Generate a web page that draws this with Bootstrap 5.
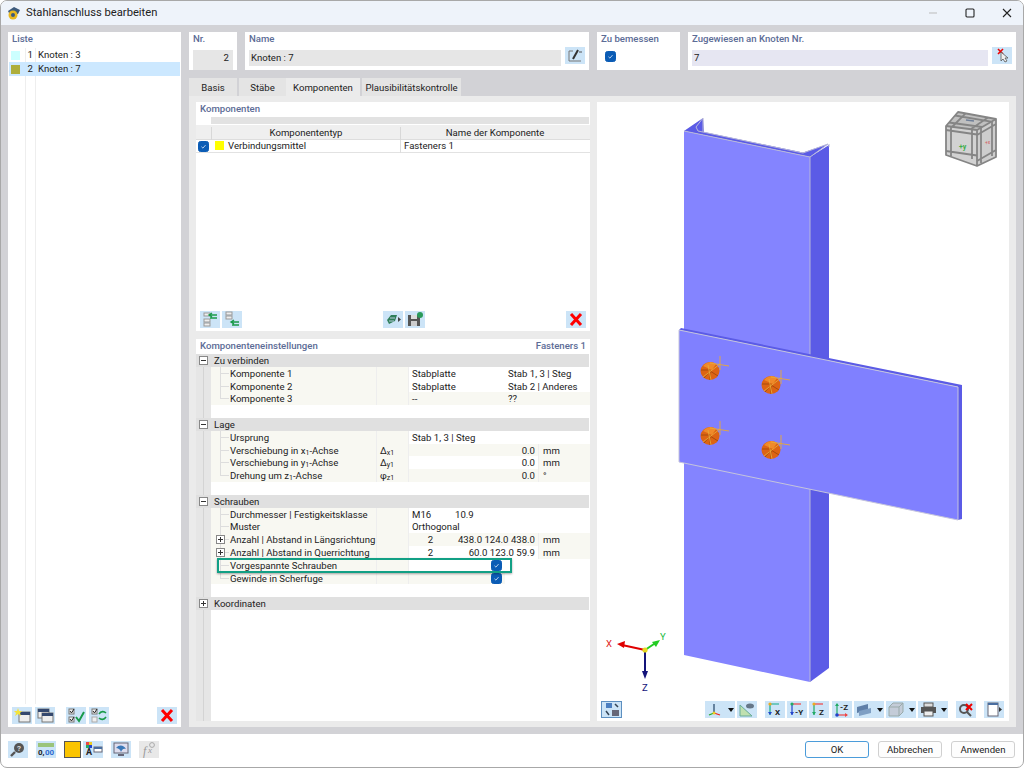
<!DOCTYPE html>
<html lang="de">
<head>
<meta charset="UTF-8">
<title>Stahlanschluss bearbeiten</title>
<link href="https://cdn.jsdelivr.net/npm/bootstrap@5.3.0/dist/css/bootstrap.min.css" rel="stylesheet">
<style>
body { margin: 0; background: #fff; font-family: Roboto, "Liberation Sans", sans-serif; font-size: 9.6px; color: #222; line-height: 12.8px; }
.dlg { width: 1024px; height: 768px; background: #fff; border: 1px solid #a8a8a8; border-radius: 7px; overflow: hidden; }
.titlebar { height: 24px; background: #eef3fa; font-size: 11.2px; padding-left: 6px; gap: 5px; flex: none; }
.win-btns { gap: 27px; padding-right: 11px; }
.main-area { height: 709px; background: #d2d2d6; padding: 7px 7px; gap: 8px; flex: none; }
.pane { background: #fff; }
.list-pane { width: 173px; flex: none; }
.right-area { width: 827px; flex: none; }
.cap { color: #5c6c96; font-weight: 500; padding: 1px 4px; height: 15px; flex: none; }
.list-body { background: linear-gradient(to right, transparent 16px, #eee 16px, #eee 17px, transparent 17px, transparent 26px, #eee 26px, #eee 27px, transparent 27px); margin: 1px 1px 3px 1px; }
.list-item { height: 14px; padding-left: 2px; }
.list-item.sel { background: #cce8ff; }
.swatch { width: 9px; height: 9px; margin-right: 5px; flex: none; }
.sw-a { background: #ccffff; }
.sw-b { background: #aeae3c; }
.num { width: 8px; text-align: right; margin-right: 5px; }
.tbtn { width: 20px; height: 17px; background: #cce4f7; display: inline-flex; align-items: center; justify-content: center; flex: none; }
.tbtn.wide { width: 30px; justify-content: flex-start; }
.tbtn.wide::after { content: ""; border-left: 3.5px solid transparent; border-right: 3.5px solid transparent; border-top: 4px solid #111; margin-left: 3px; }
.tbtn.off { background: #e8e8e8; }
.tbtn.on { outline: 1px solid #5d8fc0; outline-offset: -1px; }
.tbtn svg { width: 20px; height: 17px; flex: none; }
.list-tools { height: 17px; padding: 0 4px; margin-bottom: 3px; gap: 3px; }
.fld { height: 16px; background: #e6e6e6; padding: 2px 4px 2px 2px; margin: 3px 4px 0; flex: 1; }
.fld-blue { background: #e6e6f2; }
.w-nr { width: 48px; }
.w-name { width: 344px; }
.w-bem { width: 83px; }
.w-zug { width: 328px; }
.top-row { height: 38px; gap: 8px; }
.form-check-input.bluecheck { width: 11px; height: 11px; margin: 0; background-color: #0b5cb5; border-color: #0b5cb5; border-radius: 2.5px; flex: none; background-image: url("data:image/svg+xml,%3Csvg xmlns='http://www.w3.org/2000/svg' viewBox='0 0 11 11'%3E%3Cpath d='M3 5.8 L4.8 7.5 L8 3.8' fill='none' stroke='%23dde8f6'/%3E%3C/svg%3E"); }
.tabs-row { margin-top: 8px; height: 18px; gap: 2px; }
.tab-it { background: #e4e4e4; height: 18px; padding: 4px 0 0; text-align: center; }
.tab-it.act { background: #ebebeb; }
.t1 { width: 48px; } .t2 { width: 47px; margin-right: -2px; } .t3 { width: 74px; } .t4 { width: 99px; }
.tab-body { height: 631px; background: #ebebeb; padding: 6px 7px; gap: 7px; }
.left-col { width: 394px; gap: 8px; flex: none; }
.comp-pane { height: 229px; }
.band { height: 7px; margin: 0 1px 1px 0; display: grid; grid-template-columns: 15px 189px 189px; background: #e2e2e2; }
.head-grid { display: grid; grid-template-columns: 15px 189px 189px; height: 15px; background: #efefef; text-align: center; border-bottom: 1px solid #ddd; padding-top: 2px; }
.head-grid > div + div { border-left: 1px solid #d8d8d8; }
.row-grid { display: grid; grid-template-columns: 15px 189px 189px; height: 13px; border-bottom: 1px solid #e2e2e2; }
.row-grid > div + div + div { border-left: 1px solid #ddd; padding-left: 3px; }
.yellow { width: 9px; height: 9px; background: #ff0; margin: 1px 4px 0 4px; }
.comp-tools { height: 17px; margin: auto 4px 3px 4px; }
.tree { position: relative; flex: 1; padding-left: 15px; background: linear-gradient(to right, #e6e6e6 7px, #d4d4d4 7px, #d4d4d4 8px, #e6e6e6 8px, #e6e6e6 15px, #fff 15px); }
.grp { height: 12.8px; margin-left: -15px; background: #e0e0e0; padding: 1px 0 0 18px; position: relative; margin-right: 1px; }
.box { width: 9px; height: 9px; border: 1px solid #888; background: #fff; display: block; position: absolute; left: 3px; top: 2px; }
.box::before { content: ""; position: absolute; left: 1px; right: 1px; top: 3px; height: 1px; background: #333; }
.box.plus::after { content: ""; position: absolute; top: 1px; bottom: 1px; left: 3px; width: 1px; background: #333; }
.trow { display: grid; grid-template-columns: 165px 33px 43px 53px 33px 52px; height: 12.8px; margin-right: 1px; }
.trow > div { overflow: hidden; white-space: nowrap; padding: 1px 3px 0; }
.lbl, .sym { background: #f8f8f2; }
.trow > .lbl { position: relative; padding-left: 19px; padding-right: 0; }
.lbl::before { content: ""; position: absolute; left: 9px; top: 0; bottom: 0; width: 1px; background: #ddd; }
.lbl::after { content: ""; position: absolute; left: 9px; top: 6px; width: 9px; height: 1px; background: #ddd; }
.lbl.end::before { bottom: 6px; }
.lbl .box { left: 5px; top: 2px; z-index: 1; }
.sym { border-left: 1px solid #eee; border-right: 1px solid #eee; }
.bg { background: #f8f8f2; }
.sp2 { grid-column: span 2; }
.sp3 { grid-column: span 3; }
.sp4 { grid-column: span 4; }
.trow > .unit { border-left: 1px solid #eee; padding-left: 4px; }
.gap-row { height: 12.8px; }
.tree sub { font-size: 7px; bottom: -1px; line-height: 0; }
.mark-box { position: absolute; left: 21px; top: 204px; width: 295px; height: 15px; border: 2px solid #12a085; box-shadow: 0 1px 2px rgba(0,0,0,.35); }
.view-pane { width: 412px; height: 619px; position: relative; flex: none; }
.view-pane > svg { display: block; }
.view-tools { position: absolute; left: 4px; right: 4px; top: 599px; height: 17px; }
.foot { height: 33px; padding: 7px 8px 0 7px; }
.foot .tbtn { margin-right: 8px; }
.yellow-btn { width: 17px; height: 17px; background: #fac400; border: 1px solid #555; margin-right: 2px; }
.dlg-btn { width: 64px; height: 17px; padding: 0; font-size: 9.6px; line-height: 15px; color: #222; background: #fdfdfd; border: 1px solid #d0d0d0; border-radius: 3px; margin-left: 9px; }
.dlg-btn.def { border: 1px solid #4a9bd9; }
.ms-2px { margin-left: 2px; }
.ms-8px { margin-left: 8px; }
.tool-mid { margin-left: 141px; }
.vt-first { width: 21px; }
.vt-axes { margin-left: 83px; }
.vt-z { margin-left: 3px; }
</style>
</head>
<body>
<div class="dlg d-flex flex-column">

  <div class="titlebar d-flex align-items-center">
    <svg width="14" height="14" viewBox="0 0 14 14"><path d="M1 5 L7 1 L13 4 L11 8 L3 9 Z" fill="#3c5a7c"/><circle cx="6" cy="9" r="4.5" fill="#e8b820"/><circle cx="6" cy="9" r="2" fill="#3c5a7c"/></svg>
    <span>Stahlanschluss bearbeiten</span>
    <div class="win-btns d-flex align-items-center ms-auto">
      <svg width="10" height="10" viewBox="0 0 10 10"><path d="M1 5 H9" stroke="#bbb"/></svg>
      <svg width="10" height="10" viewBox="0 0 10 10"><rect x="1" y="1" width="8" height="8" rx="1" fill="none" stroke="#222" stroke-width="1.1"/></svg>
      <svg width="10" height="10" viewBox="0 0 10 10"><path d="M1 1 L9 9 M9 1 L1 9" stroke="#222" stroke-width="1.1"/></svg>
    </div>
  </div>

  <div class="main-area d-flex">
    <div class="pane list-pane d-flex flex-column">
      <div class="cap">Liste</div>
      <div class="list-body flex-grow-1">
        <div class="list-item d-flex align-items-center"><span class="swatch sw-a"></span><span class="num">1</span><span>Knoten : 3</span></div>
        <div class="list-item sel d-flex align-items-center"><span class="swatch sw-b"></span><span class="num">2</span><span>Knoten : 7</span></div>
      </div>
      <div class="list-tools d-flex">
        <span class="tbtn"><svg viewBox="0 0 20 17"><rect x="7" y="5" width="11" height="10" fill="#eee" stroke="#777"/><rect x="7" y="5" width="11" height="3" fill="#34486e"/><path d="M6 1 L7 4 L10 4 L8 6 L9 9 L6 7 L3 9 L4 6 L2 4 L5 4 Z" fill="#f4e43c"/></svg></span>
        <span class="tbtn"><svg viewBox="0 0 20 17"><rect x="3" y="2" width="11" height="9" fill="#eee" stroke="#777"/><rect x="3" y="2" width="11" height="3" fill="#34486e"/><rect x="7" y="6" width="11" height="9" fill="#eee" stroke="#777"/><rect x="7" y="6" width="11" height="3" fill="#34486e"/></svg></span>
        <span class="tbtn ms-2"><svg viewBox="0 0 20 17"><rect x="3" y="2" width="5" height="5" fill="#eee" stroke="#777"/><rect x="3" y="10" width="5" height="5" fill="#eee" stroke="#777"/><path d="M4 4 L5.5 6 L8 2 M4 12 L5.5 14 L8 10" fill="none" stroke="#222"/><path d="M10 10 L13 14 L18 5" fill="none" stroke="#1a9a4a" stroke-width="2"/></svg></span>
        <span class="tbtn"><svg viewBox="0 0 20 17"><rect x="3" y="2" width="5" height="5" fill="#eee" stroke="#777"/><rect x="3" y="10" width="5" height="5" fill="#eee" stroke="#aaa"/><path d="M4 4 L5.5 6 L8 2" fill="none" stroke="#222"/><path d="M10 7 C12 4 15 4 17 6 M17 10 C15 13 12 13 10 11" fill="none" stroke="#1a9a4a" stroke-width="1.6"/></svg></span>
        <span class="tbtn ms-auto"><svg viewBox="0 0 20 17"><path d="M5 3 L15 14 M15 3 L5 14" stroke="#f00" stroke-width="3"/></svg></span>
      </div>
    </div>

    <div class="right-area d-flex flex-column">
      <div class="top-row d-flex">
        <div class="pane w-nr d-flex flex-column"><div class="cap">Nr.</div><div class="fld text-end">2</div></div>
        <div class="pane w-name d-flex flex-column">
          <div class="cap">Name</div>
          <div class="d-flex"><div class="fld">Knoten : 7</div>
            <span class="tbtn me-1"><svg viewBox="0 0 20 17"><path d="M8 4 H4 V14 H16" fill="none" stroke="#777"/><path d="M8 12 L13 3" stroke="#333" stroke-width="2"/><path d="M14 5 H17" stroke="#555"/></svg></span></div>
        </div>
        <div class="pane w-bem d-flex flex-column"><div class="cap">Zu bemessen</div><div class="ps-1 pt-1 ms-1 d-flex"><input class="form-check-input bluecheck" type="checkbox" checked></div></div>
        <div class="pane w-zug d-flex flex-column">
          <div class="cap">Zugewiesen an Knoten Nr.</div>
          <div class="d-flex"><div class="fld fld-blue">7</div>
            <span class="tbtn me-1"><svg viewBox="0 0 20 17"><path d="M6 2 L11 7 M11 2 L6 7" stroke="#e00" stroke-width="1.6"/><path d="M9 5 L9 14 L11 12 L13 15 L15 14 L13 11 L16 11 Z" fill="#eee" stroke="#555" stroke-width=".8"/></svg></span></div>
        </div>
      </div>

      <div class="tabs-row d-flex">
        <div class="tab-it t1">Basis</div>
        <div class="tab-it t2">Stäbe</div>
        <div class="tab-it t3 act">Komponenten</div>
        <div class="tab-it t4">Plausibilitätskontrolle</div>
      </div>

      <div class="tab-body d-flex">
        <div class="left-col d-flex flex-column">
          <div class="pane comp-pane d-flex flex-column">
            <div class="cap">Komponenten</div>
            <div class="band"><div class="bg-white"></div></div>
            <div class="head-grid"><div></div><div>Komponententyp</div><div>Name der Komponente</div></div>
            <div class="row-grid">
              <div class="d-flex justify-content-center align-items-center"><input class="form-check-input bluecheck" type="checkbox" checked></div>
              <div class="d-flex"><span class="yellow"></span>Verbindungsmittel</div>
              <div>Fasteners 1</div>
            </div>
            <div class="comp-tools d-flex">
              <span class="tbtn"><svg viewBox="0 0 20 17"><rect x="4" y="2" width="6" height="3" fill="#eee" stroke="#999"/><rect x="4" y="8" width="6" height="3" fill="#eee" stroke="#999"/><rect x="4" y="12" width="6" height="3" fill="#eee" stroke="#999"/><path d="M17 4 H9 M12 2 L9 4 L12 6 M17 7 H10" stroke="#1a9a4a" stroke-width="1.4" fill="none"/></svg></span>
              <span class="tbtn ms-2px"><svg viewBox="0 0 20 17"><rect x="4" y="1" width="6" height="3" fill="#eee" stroke="#999"/><rect x="4" y="5" width="6" height="3" fill="#eee" stroke="#999"/><path d="M17 11 H9 M12 9 L9 11 L12 13 M17 14 H10" stroke="#1a9a4a" stroke-width="1.4" fill="none"/></svg></span>
              <span class="tbtn tool-mid"><svg viewBox="0 0 20 17"><path d="M4 9 L8 4 H14 L12 10 L6 13 Z" fill="#2f7f5a"/><path d="M7 7 L12 7 M6 10 L11 10" stroke="#bcd"/><path d="M15 6 L18 8.5 L15 11 Z" fill="#444"/></svg></span>
              <span class="tbtn ms-2px"><svg viewBox="0 0 20 17"><path d="M3 4 H13 L15 6 V15 H3 Z" fill="#555"/><rect x="6" y="4" width="6" height="4" fill="#ddd"/><rect x="6" y="10" width="6" height="5" fill="#ccc"/><circle cx="15" cy="4" r="3" fill="#2a9a5a"/></svg></span>
              <span class="tbtn ms-auto"><svg viewBox="0 0 20 17"><path d="M5 3 L15 14 M15 3 L5 14" stroke="#f00" stroke-width="3"/></svg></span>
            </div>
          </div>

          <div class="pane flex-grow-1 d-flex flex-column">
            <div class="cap d-flex justify-content-between"><span>Komponenteneinstellungen</span><span>Fasteners 1</span></div>
            <div class="tree">
              <div class="grp"><span class="box"></span>Zu verbinden</div>
              <div class="trow"><div class="lbl">Komponente 1</div><div class="sym"></div><div class="sp2">Stabplatte</div><div class="sp2">Stab 1, 3 | Steg</div></div>
              <div class="trow"><div class="lbl">Komponente 2</div><div class="sym"></div><div class="sp2">Stabplatte</div><div class="sp2">Stab 2 | Anderes</div></div>
              <div class="trow"><div class="lbl end">Komponente 3</div><div class="sym"></div><div class="sp2 bg">--</div><div class="sp2 bg">??</div></div>
              <div class="gap-row"></div>

              <div class="grp"><span class="box"></span>Lage</div>
              <div class="trow"><div class="lbl">Ursprung</div><div class="sym"></div><div class="sp4">Stab 1, 3 | Steg</div></div>
              <div class="trow"><div class="lbl">Verschiebung in x<sub>1</sub>-Achse</div><div class="sym">&Delta;<sub>x1</sub></div><div class="sp3 text-end bg">0.0</div><div class="unit bg">mm</div></div>
              <div class="trow"><div class="lbl">Verschiebung in y<sub>1</sub>-Achse</div><div class="sym">&Delta;<sub>y1</sub></div><div class="sp3 text-end">0.0</div><div class="unit bg">mm</div></div>
              <div class="trow"><div class="lbl end">Drehung um z<sub>1</sub>-Achse</div><div class="sym">&phi;<sub>z1</sub></div><div class="sp3 text-end bg">0.0</div><div class="unit bg">°</div></div>
              <div class="gap-row"></div>

              <div class="grp"><span class="box"></span>Schrauben</div>
              <div class="trow"><div class="lbl">Durchmesser | Festigkeitsklasse</div><div class="sym"></div><div>M16</div><div class="sp3">10.9</div></div>
              <div class="trow"><div class="lbl">Muster</div><div class="sym"></div><div class="sp4">Orthogonal</div></div>
              <div class="trow"><div class="lbl"><span class="box plus"></span>Anzahl | Abstand in Längsrichtung</div><div class="sym"></div><div class="text-center bg">2</div><div class="sp2 text-end bg">438.0 124.0 438.0</div><div class="unit bg">mm</div></div>
              <div class="trow"><div class="lbl"><span class="box plus"></span>Anzahl | Abstand in Querrichtung</div><div class="sym"></div><div class="text-center">2</div><div class="sp2 text-end">60.0 123.0 59.9</div><div class="unit bg">mm</div></div>
              <div class="trow"><div class="lbl">Vorgespannte Schrauben</div><div class="sym"></div><div class="sp2 d-flex justify-content-end align-items-center"><input class="form-check-input bluecheck" type="checkbox" checked></div><div class="sp2"></div></div>
              <div class="trow"><div class="lbl end">Gewinde in Scherfuge</div><div class="sym"></div><div class="sp2 d-flex justify-content-end align-items-center bg"><input class="form-check-input bluecheck" type="checkbox" checked></div><div class="sp2"></div></div>
              <div class="gap-row"></div>

              <div class="grp"><span class="box plus"></span>Koordinaten</div>
              <div class="mark-box"></div>
            </div>
          </div>
        </div>

        <div class="pane view-pane">
          <svg width="412" height="619" viewBox="597 102 412 619">
            <!-- C section -->
            <polygon points="810,157 829,145 829,668 810,682" fill="#5b5be6"/>
            <polygon points="684,131 703,118 704,132 803,152.5 828,144 810,157" fill="#5b5be6"/>
            <polygon points="684,131 810,157 810,682 684,655" fill="#8484ff"/>
            <path d="M684,131 L810,157 V682 M703,118 L696,127 L698,131 L803,153 L828,144 L810,157 M703,118 V132 M829,144 V147" fill="none" stroke="#b8b8d8" stroke-width="1"/>
            <!-- plate -->
            <polygon points="679,330 681,328 962,385 962,519 958,520 958,387" fill="#5b5be6"/>
            <polygon points="679,330 958,387 958,520 679,462" fill="#8080ff"/>
            <path d="M679,462 V330 L958,387 V520 L679,462" fill="none" stroke="#c4c4dc"/>
            <g id="bolt">
              <ellipse cx="710" cy="371" rx="9.5" ry="9" fill="#dd6414"/>
              <path d="M703 366 A9 9 0 0 1 716 364 L712 370 Z" fill="#ef8a2a"/>
              <path d="M704 378 L710 371 L710 380 M710 371 L718 376 M701 370 H710" stroke="#a84c0a" fill="none"/>
              <path d="M703 377 L720 364 M720 356 V370 M710 363 L729 366 M708 365 L711 380" stroke="#e8a838" stroke-width=".9" fill="none"/>
            </g>
            <use href="#bolt" x="61" y="14"/>
            <use href="#bolt" x="0" y="65"/>
            <use href="#bolt" x="61" y="79"/>
            <!-- view cube -->
            <polygon points="946,126 977,130 977,166 946,155" fill="#d2d2d2"/>
            <polygon points="977,130 996,119 996,157 977,166" fill="#cdcdcd"/>
            <polygon points="946,126 958,112 996,119 977,130" fill="#c0c0c0"/>
            <g stroke="#858585" stroke-width="1.8" fill="none" stroke-linejoin="round">
              <path d="M951 127 V156 M972 129 V159 M946 130 L977 134.5 M946 151 L977 155.5"/>
              <path d="M981 128 V163 M992 121 V156 M977 135 L996 124 M977 161 L996 150"/>
              <path d="M949 122.5 L982 127 M955 115.5 L991 121.7 M952 127 L965.6 113.4 M971 129 L988 117.6"/>
              <path d="M946 126 L958 112 L996 119 V157 L977 166 L946 155 Z M946 126 L977 130 L996 119 M977 130 V166"/>
            </g>
            <path d="M966 120 L974 121" stroke="#6f7f98" stroke-width="1.5"/>
            <text x="959" y="149" font-size="7" font-weight="700" fill="#3fae4a">+y</text>
            <text x="985" y="144" font-size="5" fill="#d46060">+x</text>
            <!-- axes -->
            <path d="M645 650 L622 645" stroke="#e00000" stroke-width="2"/><polygon points="617,644 625,641 624,648" fill="#e00000"/>
            <path d="M645 650 L657 642" stroke="#22cc22" stroke-width="2"/><polygon points="660,640 652,642 656,647" fill="#22cc22"/>
            <path d="M645 650 V672" stroke="#14147a" stroke-width="2"/><polygon points="645,679 642,671 648,671" fill="#14147a"/>
            <circle cx="645" cy="650" r="2.6" fill="#e8d820"/>
            <text x="606" y="647" font-size="9.5" fill="#e02020">X</text>
            <text x="660" y="640" font-size="9.5" fill="#22bb44">Y</text>
            <text x="642" y="691" font-size="9.5" fill="#14147a">Z</text>
          </svg>
          <div class="view-tools d-flex">
            <span class="tbtn on vt-first"><svg viewBox="0 0 20 17"><rect x="4" y="2" width="6" height="5" fill="#4a7ec0"/><rect x="10" y="9" width="7" height="6" fill="#667"/><path d="M13 3 L16 6 M4 10 L7 14" stroke="#345" stroke-width="1.5"/></svg></span>
            <span class="tbtn wide vt-axes"><svg viewBox="0 0 20 17"><path d="M9 3 V12" stroke="#246" stroke-width="1.2"/><path d="M9 12 L15 14" stroke="#e22" stroke-width="1.2"/><path d="M9 12 L4 14" stroke="#2a2" stroke-width="1.2"/><circle cx="9" cy="12" r="1.5" fill="#ec2"/></svg></span>
            <span class="tbtn ms-2px"><svg viewBox="0 0 20 17"><path d="M3 15 L3 4 L15 15 Z" fill="#bfe0b0" stroke="#6a9"/><ellipse cx="13" cy="5" rx="4" ry="2.5" fill="#678"/></svg></span>
            <span class="tbtn ms-8px"><svg viewBox="0 0 20 17"><path d="M5 3 V14 M5 3 H14" stroke="#1a8" stroke-width="1.2"/><circle cx="5" cy="3" r="1.6" fill="#ea2"/><path d="M5 14 L3 11 H7 Z" fill="#24c"/><text x="10" y="14" font-size="8" font-weight="700" fill="#222">X</text></svg></span>
            <span class="tbtn ms-2px"><svg viewBox="0 0 20 17"><path d="M5 3 V14" stroke="#24c" stroke-width="1.2"/><path d="M5 3 H14" stroke="#e44" stroke-width="1.2"/><circle cx="5" cy="3" r="1.6" fill="#2a6"/><path d="M5 14 L3 11 H7 Z" fill="#24c"/><text x="8" y="14" font-size="8" font-weight="700" fill="#222">-Y</text></svg></span>
            <span class="tbtn ms-2px"><svg viewBox="0 0 20 17"><path d="M5 3 V14" stroke="#2a6" stroke-width="1.2"/><path d="M5 3 H14" stroke="#e44" stroke-width="1.2"/><circle cx="5" cy="3" r="1.6" fill="#ea2"/><path d="M5 14 L3 11 H7 Z" fill="#2a6"/><text x="10" y="14" font-size="8" font-weight="700" fill="#222">Z</text></svg></span>
            <span class="tbtn vt-z"><svg viewBox="0 0 20 17"><path d="M5 3 V14" stroke="#2a6" stroke-width="1.2"/><path d="M5 14 H15" stroke="#e44" stroke-width="1.2"/><circle cx="5" cy="14" r="1.8" fill="#24c"/><path d="M5 2 L3 5 H7 Z" fill="#2a6"/><path d="M16 14 L13 12 V16 Z" fill="#e44"/><text x="8" y="9" font-size="8" font-weight="700" fill="#222">-Z</text></svg></span>
            <span class="tbtn wide ms-2px"><svg viewBox="0 0 20 17"><path d="M3 6 L14 3 V9 L3 12 Z" fill="#5f7fa8"/><path d="M5 10 L17 7 V12 L5 15 Z" fill="#7f9fc4"/></svg></span>
            <span class="tbtn wide ms-2px"><svg viewBox="0 0 20 17"><path d="M3 6 L7 2 H17 V11 L13 15 H3 Z M3 6 H13 V15 M13 6 L17 2" fill="#c4ccd8" stroke="#9aa"/></svg></span>
            <span class="tbtn wide ms-2px"><svg viewBox="0 0 20 17"><rect x="6" y="2" width="9" height="4" fill="#ddd" stroke="#555"/><rect x="3" y="6" width="15" height="6" fill="#555"/><rect x="6" y="10" width="9" height="5" fill="#eee" stroke="#555"/></svg></span>
            <span class="tbtn ms-8px"><svg viewBox="0 0 20 17"><circle cx="8" cy="8" r="4" fill="none" stroke="#555" stroke-width="2"/><path d="M11 11 L15 15" stroke="#555" stroke-width="2"/><path d="M10 3 L16 9 M16 3 L10 9" stroke="#e00" stroke-width="2"/></svg></span>
            <span class="tbtn ms-8px"><svg viewBox="0 0 20 17"><rect x="4" y="2" width="10" height="13" fill="#fff" stroke="#667"/><rect x="4" y="2" width="10" height="2" fill="#4a6ea0"/><path d="M15 6 L18 8.5 L15 11 Z" fill="#333"/></svg></span>
          </div>
        </div>
      </div>
    </div>
  </div>

  <div class="foot d-flex">
    <span class="tbtn"><svg viewBox="0 0 20 17"><circle cx="11" cy="7" r="5" fill="#555"/><path d="M7 11 L3 15" stroke="#555" stroke-width="2.4"/><text x="9" y="10" font-size="8" font-weight="700" fill="#ddd">?</text></svg></span>
    <span class="tbtn"><svg viewBox="0 0 20 17"><rect x="2" y="2" width="16" height="4" fill="#9bc47a"/><text x="2" y="14" font-size="8" font-weight="700" fill="#222">0,</text><text x="9" y="14" font-size="8" font-weight="700" fill="#2a6ad0">00</text></svg></span>
    <span class="yellow-btn"></span>
    <span class="tbtn"><svg viewBox="0 0 20 17"><rect x="3" y="1" width="3" height="3" fill="#e44"/><rect x="6" y="1" width="3" height="3" fill="#ec2"/><rect x="3" y="4" width="3" height="3" fill="#2a6"/><rect x="6" y="4" width="3" height="3" fill="#24c"/><text x="3" y="14" font-size="9" font-weight="700" fill="#222">A</text><rect x="11" y="6" width="8" height="5" fill="#fff" stroke="#667"/><rect x="11" y="6" width="8" height="2" fill="#4a6ea0"/></svg></span>
    <span class="tbtn"><svg viewBox="0 0 20 17"><rect x="3" y="2" width="14" height="10" fill="#dde" stroke="#667"/><path d="M5 7 C8 3 13 4 15 8 C12 7 11 9 10 11 C9 8 7 7 5 7 Z" fill="#3a78b8"/><rect x="7" y="13" width="6" height="2" fill="#667"/></svg></span>
    <span class="tbtn off"><svg viewBox="0 0 20 17"><text x="4" y="14" font-size="12" font-style="italic" font-family="Liberation Serif, serif" fill="#999">f</text><text x="9" y="12" font-size="9" font-style="italic" font-family="Liberation Serif, serif" fill="#999">x</text><circle cx="13" cy="4" r="2.4" fill="none" stroke="#aaa"/></svg></span>
    <button class="btn dlg-btn def ms-auto" type="button">OK</button>
    <button class="btn dlg-btn" type="button">Abbrechen</button>
    <button class="btn dlg-btn" type="button">Anwenden</button>
  </div>
</div>
<script src="https://cdn.jsdelivr.net/npm/bootstrap@5.3.0/dist/js/bootstrap.bundle.min.js"></script>
</body>
</html>
